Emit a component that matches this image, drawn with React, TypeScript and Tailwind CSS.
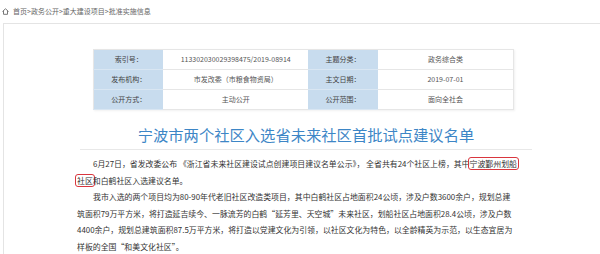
import React from "react";

const rows = [
  ["索引号：", "113302030029398475/2019-08914", "主题分类：", "政务综合类"],
  ["发布机构：", "市发改委（市粮食物资局）", "主文日期：", "2019-07-01"],
  ["公开方式：", "主动公开", "公开范围：", "面向全社会"],
];

const Mark = ({ children }: { children: React.ReactNode }) => (
  <span className="border-[1.5px] border-[#d9363e] rounded-[3px] px-[1px] -mx-[2px]">{children}</span>
);

export default function App() {
  return (
    <div
      className="w-[600px] h-[254px] bg-white overflow-hidden text-[#333]"
      style={{ fontFamily: '"Noto Sans CJK SC", "Noto Sans", sans-serif' }}
    >
      {/* breadcrumb */}
      <div className="h-[23px] flex items-center pl-[2px] gap-[4px] text-[7px] text-[#666]">
        <svg width="7" height="7" viewBox="0 0 7 7" className="mb-[1px]">
          <path d="M0.5 3.5 L3.5 0.8 L6.5 3.5 M1.5 3 V6.3 H5.5 V3" fill="none" stroke="#777" strokeWidth="1" />
        </svg>
        <span>首页&gt;政务公开&gt;重大建设项目&gt;批准实施信息</span>
      </div>

      <div className="ml-[3px] h-full border-l border-t border-[#e4e4e4]">
        {/* info table */}
        <table className="mt-[25px] ml-[89px] w-[421px] border-collapse border border-[#e6e6e6] text-[7px] shadow-[1px_1px_2px_rgba(0,0,0,0.06)]">
          <tbody>
            {rows.map((r, i) => (
              <tr key={i} className="h-[20px]">
                <td className="w-[70px] bg-[#c8dcee] text-center text-[#444] border-b border-[#d9e6f2]">{r[0]}</td>
                <td className="w-[145px] text-center text-[#555] border-b border-[#e6e6e6]">{r[1]}</td>
                <td className="w-[70px] bg-[#c8dcee] text-center text-[#444] border-b border-[#d9e6f2]">{r[2]}</td>
                <td className="w-[136px] text-center text-[#555] border-b border-[#e6e6e6]">{r[3]}</td>
              </tr>
            ))}
          </tbody>
        </table>

        {/* title */}
        <div className="mt-[14px] ml-[76px] w-[452px] border-b border-[#e8e8e8] pb-[5px] text-center text-[15.3px] leading-[20px] text-[#3d86c6]">
          宁波市两个社区入选省未来社区首批试点建议名单
        </div>

        {/* body */}
        <div className="mt-[6px] ml-[73px] w-[470px] text-[7.9px] leading-[16.6px] text-[#333] whitespace-nowrap">
          <div className="pl-[16px]">
            6月27日，省发改委公布 《浙江省未来社区建设试点创建项目建议名单公示》， 全省共有24个社区上榜，其中<Mark>宁波鄞州划船</Mark>
          </div>
          <div>
            <Mark>社区</Mark>和白鹤社区入选建议名单。
          </div>
          <div className="pl-[16px]">
            我市入选的两个项目均为80-90年代老旧社区改造类项目，其中白鹤社区占地面积24公顷，涉及户数3600余户，规划总建
          </div>
          <div>筑面积79万平方米，将打造延吉续今、一脉流芳的白鹤“延芳里、天空城”未来社区，划船社区占地面积28.4公顷，涉及户数</div>
          <div>4400余户，规划总建筑面积87.5万平方米，将打造以党建文化为引领，以社区文化为特色，以全龄精英为示范，以生态宜居为</div>
          <div>样板的全国“和美文化社区”。</div>
        </div>
      </div>
    </div>
  );
}
